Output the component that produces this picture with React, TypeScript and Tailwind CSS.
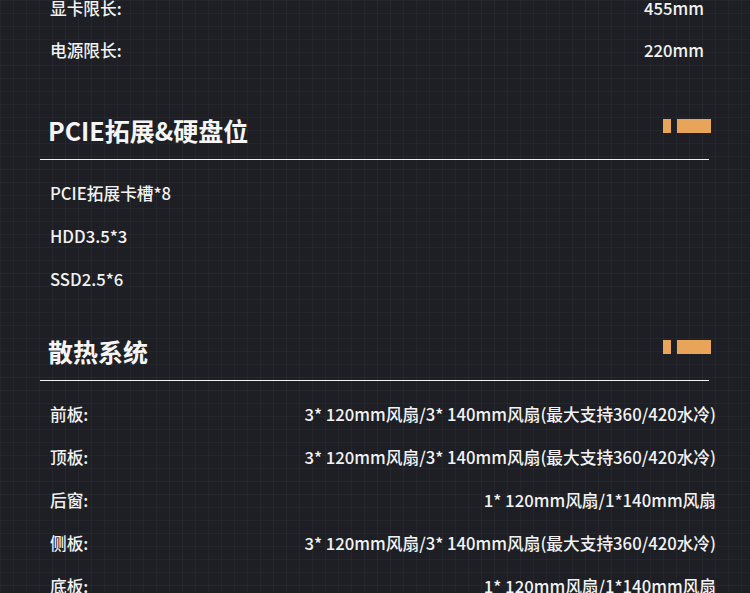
import React from "react";

const font = { fontFamily: '"Noto Sans CJK SC", "Noto Sans", sans-serif' };

function Row({ label, value, pr = "pr-[46px]", h = "h-[43px]" }: { label: string; value?: string; pr?: string; h?: string }) {
  return (
    <div className={`${h} pt-[4px] flex items-center justify-between pl-[50px] ${pr} text-[16.7px] font-medium text-[#f2f2f2]`}>
      <span>{label}</span>
      {value && <span>{value}</span>}
    </div>
  );
}

function Heading({ title }: { title: string }) {
  return (
    <div className="px-[40px]">
      <div className="h-[36px] flex items-center justify-between pl-[8px]">
        <span className="text-[25px] font-bold leading-[36px] text-[#f5f5f5]">{title}</span>
        <div className="flex items-center gap-[6px] -mt-[8px] mr-[-1px]">
          <div className="w-[8px] h-[14px] bg-[#e8a55a]" />
          <div className="w-[34px] h-[14px] bg-[#e8a55a]" />
        </div>
      </div>
      <div className="mt-[11px] h-[1px] w-[669px] bg-[#f0f0f0]" />
    </div>
  );
}

export default function App() {
  const fan3 = "3* 120mm风扇/3* 140mm风扇(最大支持360/420水冷)";
  const fan1 = "1* 120mm风扇/1*140mm风扇";
  return (
    <div
      style={font}
      className="w-[750px] h-[593px] overflow-hidden bg-[#1d1f25] bg-[linear-gradient(rgba(255,255,255,0.03)_1px,transparent_1px),linear-gradient(90deg,rgba(255,255,255,0.03)_1px,transparent_1px)] bg-[size:13px_13px]"
    >
      <div className="-mt-[14px]">
        <Row label="显卡限长:" value="455mm" h="h-[42px]" />
        <Row label="电源限长:" value="220mm" h="h-[42px]" />
      </div>
      <div className="mt-[42px]">
        <Heading title="PCIE拓展&硬盘位" />
      </div>
      <div className="mt-[10px]">
        <Row label="PCIE拓展卡槽*8" />
        <Row label="HDD3.5*3" />
        <Row label="SSD2.5*6" />
      </div>
      <div className="mt-[34px]">
        <Heading title="散热系统" />
      </div>
      <div className="mt-[10px]">
        <Row label="前板:" value={fan3} pr="pr-[34px]" />
        <Row label="顶板:" value={fan3} pr="pr-[34px]" />
        <Row label="后窗:" value={fan1} pr="pr-[34px]" />
        <Row label="侧板:" value={fan3} pr="pr-[34px]" />
        <Row label="底板:" value={fan1} pr="pr-[34px]" />
      </div>
    </div>
  );
}
